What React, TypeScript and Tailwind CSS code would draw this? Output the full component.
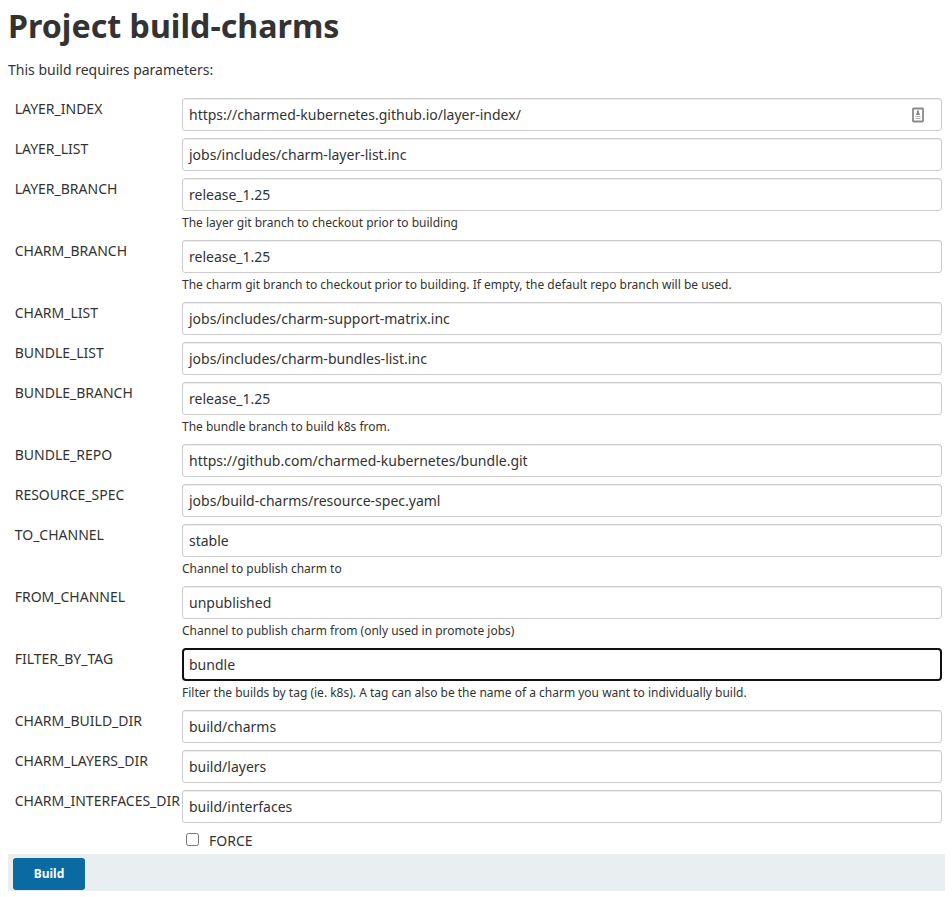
const rows: { name: string; value: string; help?: string; focus?: boolean; icon?: boolean }[] = [
  { name: 'LAYER_INDEX', value: 'https://charmed-kubernetes.github.io/layer-index/', icon: true },
  { name: 'LAYER_LIST', value: 'jobs/includes/charm-layer-list.inc' },
  { name: 'LAYER_BRANCH', value: 'release_1.25', help: 'The layer git branch to checkout prior to building' },
  { name: 'CHARM_BRANCH', value: 'release_1.25', help: 'The charm git branch to checkout prior to building. If empty, the default repo branch will be used.' },
  { name: 'CHARM_LIST', value: 'jobs/includes/charm-support-matrix.inc' },
  { name: 'BUNDLE_LIST', value: 'jobs/includes/charm-bundles-list.inc' },
  { name: 'BUNDLE_BRANCH', value: 'release_1.25', help: 'The bundle branch to build k8s from.' },
  { name: 'BUNDLE_REPO', value: 'https://github.com/charmed-kubernetes/bundle.git' },
  { name: 'RESOURCE_SPEC', value: 'jobs/build-charms/resource-spec.yaml' },
  { name: 'TO_CHANNEL', value: 'stable', help: 'Channel to publish charm to' },
  { name: 'FROM_CHANNEL', value: 'unpublished', help: 'Channel to publish charm from (only used in promote jobs)' },
  { name: 'FILTER_BY_TAG', value: 'bundle', help: 'Filter the builds by tag (ie. k8s). A tag can also be the name of a charm you want to individually build.', focus: true },
  { name: 'CHARM_BUILD_DIR', value: 'build/charms' },
  { name: 'CHARM_LAYERS_DIR', value: 'build/layers' },
  { name: 'CHARM_INTERFACES_DIR', value: 'build/interfaces' },
];

export default function App() {
  return (
    <main className="h-[897px] w-[952px] overflow-hidden bg-white pl-2 font-['Noto_Sans',sans-serif] text-sm text-[#333]">
      <h1 className="pt-1.5 text-[32.2px] leading-10 font-bold">Project build-charms</h1>
      <p className="mt-3.5 h-5 leading-5">This build requires parameters:</p>
      <div className="mt-[18px]">
        {rows.map((r) => (
          <div key={r.name} className={r.help ? 'flex h-[62px]' : 'flex h-10'}>
            <label className="w-[174px] shrink-0 pt-px pl-[6.7px] leading-5 whitespace-nowrap">{r.name}</label>
            <div className="w-[760px]">
              <div
                className={
                  r.focus
                    ? 'flex h-[33px] items-center justify-between rounded-[4px] border-2 border-[#101010] px-[5px]'
                    : 'flex h-[33px] items-center justify-between rounded-[3px] border border-[#ccc] px-1.5 shadow-[inset_0_1px_1px_rgba(0,0,0,0.075)]'
                }
              >
                <span>{r.value}</span>
                {r.icon && (
                  <svg className="mr-[11px]" width="12" height="16" viewBox="0 0 12 16" fill="none">
                    <rect x="1" y="1.5" width="10" height="13" rx="0.5" stroke="#8a8a8a" strokeWidth="1.8" />
                    <path d="M5 3.5H7V5.5L8.2 8H3.8L5 5.5Z" fill="#888" />
                    <path d="M3.5 9.5H8.5M3.5 11.5H8.5" stroke="#b0b0b0" strokeWidth="1.2" />
                  </svg>
                )}
              </div>
              {r.help && <div className="mt-[3px] text-xs leading-[18px]">{r.help}</div>}
            </div>
          </div>
        ))}
      </div>
      <div className="flex h-6 items-start pl-[178px]">
        <span className="mt-[3px] h-[13px] w-[13px] rounded-[2.5px] border border-[#767676]" />
        <span className="mt-px ml-2.5 leading-5">FORCE</span>
      </div>
      <div className="h-[37px] w-[937px] bg-[#e9eef1] px-[5px] py-1">
        <button className="block h-8 w-[72px] rounded-[3px] bg-[#0b6aa2] text-xs font-bold text-white">Build</button>
      </div>
    </main>
  );
}
